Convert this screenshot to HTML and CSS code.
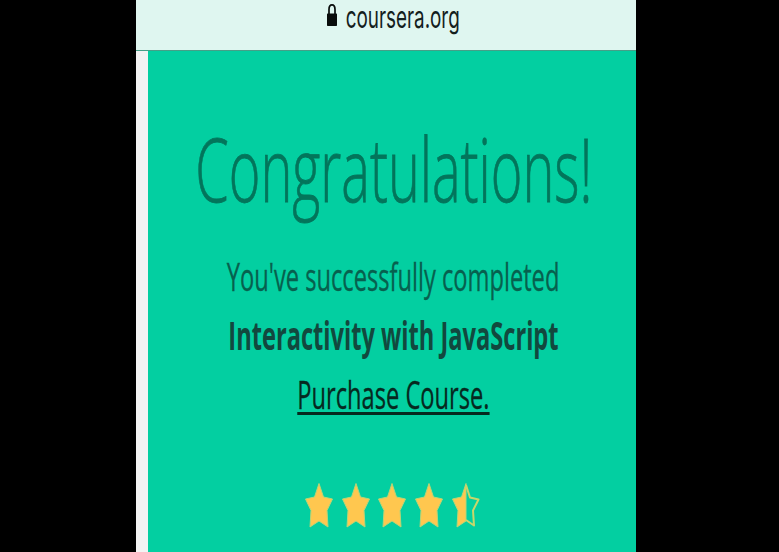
FILE: index.html
```html
<!DOCTYPE html>
<html lang="en">
<head>
<meta charset="utf-8">
<title>Coursera</title>
<link rel="stylesheet" href="styles.css">
</head>
<body>
<div class="phone">
  <header class="address-bar">
    <svg class="lock" viewBox="0 0 10 24"><path d="M2 12V6.500C2 .3 8 .3 8 6.500V12" fill="none" stroke="#080c0b" stroke-width="1.700"/><rect y="10.500" width="10" height="12.500" rx=".7" fill="#080c0b"/></svg>
    <span class="url"><span class="squeeze">coursera.org</span></span>
  </header>
  <main class="card">
    <h1 class="title"><span class="squeeze">Congratulations!</span></h1>
    <p class="line message"><span class="squeeze">You've successfully completed</span></p>
    <p class="line course"><span class="squeeze">Interactivity with JavaScript</span></p>
    <p class="line"><a class="squeeze purchase">Purchase Course.</a></p>
    <div class="stars">
      <svg class="star" viewBox="0 0 28 46"><path d="M14 1.500 18.500 15 27.500 17 22 28.500 23 45 14 39 5 45 6 28.500 .5 17 9.500 15Z"/></svg>
      <svg class="star" viewBox="0 0 28 46"><path d="M14 1.500 18.500 15 27.500 17 22 28.500 23 45 14 39 5 45 6 28.500 .5 17 9.500 15Z"/></svg>
      <svg class="star" viewBox="0 0 28 46"><path d="M14 1.500 18.500 15 27.500 17 22 28.500 23 45 14 39 5 45 6 28.500 .5 17 9.500 15Z"/></svg>
      <svg class="star" viewBox="0 0 28 46"><path d="M14 1.500 18.500 15 27.500 17 22 28.500 23 45 14 39 5 45 6 28.500 .5 17 9.500 15Z"/></svg>
      <svg class="star" viewBox="0 0 28 46"><path d="M14 1.500V39L5 45 6 28.500 .5 17 9.500 15Z"/><path class="outline" d="M14 3 18 15.500 26.500 17.500 21 28.500 22 43.500 14 38"/></svg>
    </div>
  </main>
</div>
</body>
</html>
```
FILE: styles.css
```css
body {
  margin: 0;
  height: 552px;
  overflow: hidden;
  background: #000;
}
.phone {
  width: 500px;
  height: 552px;
  margin-left: 136px;
  background: #f3f3f3;
  display: flex;
  flex-direction: column;
}
.address-bar {
  box-sizing: border-box;
  flex: none;
  height: 51px;
  padding: 2px 0 0 191px;
  display: flex;
  align-items: flex-start;
  gap: 9px;
  background: #dff6f0;
  border-bottom: 1px solid #469f88;
}
.lock {
  flex: none;
  width: 10px;
  height: 24px;
  margin-top: 1px;
}
.url {
  width: 114px;
  display: flex;
  justify-content: center;
  font: 400 29px/30px Inter, sans-serif;
  color: #14201d;
}
.squeeze {
  flex: none;
  white-space: nowrap;
}
.url .squeeze {
  transform: scale(.65, 1.05);
}
.card {
  flex: 1;
  margin-left: 12px;
  padding-left: 3px;
  background: #03cfa1;
  font-family: "Open Sans", sans-serif;
  color: #12483e;
}
.title {
  display: flex;
  justify-content: center;
  margin: 57px 0 0;
  font-size: 88px;
  line-height: 121px;
  font-weight: 300;
  color: #03755b;
  -webkit-text-stroke: .8px #03755b;
}
.title .squeeze {
  transform: scaleX(.613);
}
.line {
  display: flex;
  justify-content: center;
  margin: 0;
  font-size: 39px;
  line-height: 59px;
}
.message {
  margin-top: 17px;
  color: #07604e;
}
.message .squeeze {
  transform: scaleX(.607);
  -webkit-text-stroke: .3px #07604e;
}
.course {
  font-weight: 700;
}
.course .squeeze {
  transform: scaleX(.606);
}
.purchase {
  transform: scaleX(.607);
  color: #06291f;
  text-decoration: underline;
  text-decoration-thickness: 3px;
  text-underline-offset: 3px;
  text-decoration-skip-ink: none;
  -webkit-text-stroke: .3px #06291f;
}
.stars {
  display: flex;
  margin: 59px 0 0 154px;
  gap: 8.700px;
}
.star {
  width: 28px;
  height: 46px;
  fill: #ffc74f;
  stroke: #b9d477;
  stroke-width: 1;
  stroke-linejoin: round;
}
.star .outline {
  fill: none;
  stroke: #c9d66a;
  stroke-width: 2;
}
```
